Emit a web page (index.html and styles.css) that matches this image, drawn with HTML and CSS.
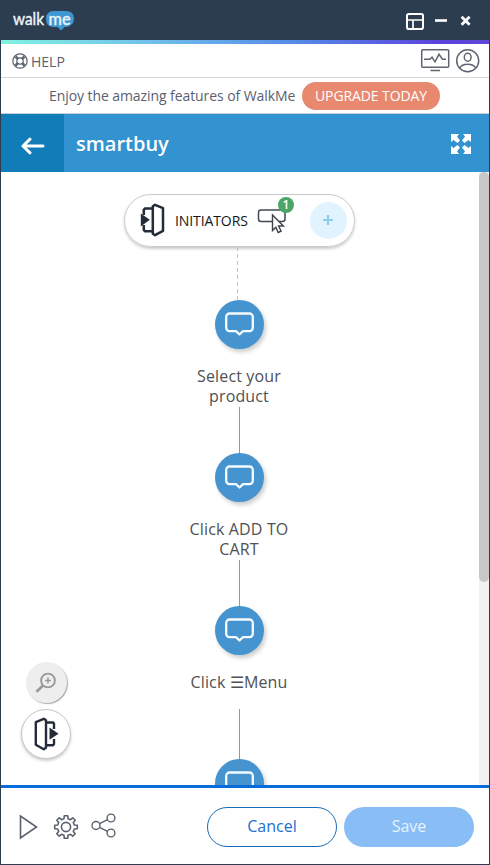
FILE: index.html
```html
<!DOCTYPE html>
<html lang="en">
<head>
<meta charset="utf-8">
<title>WalkMe Editor</title>
<link rel="stylesheet" href="styles.css">
</head>
<body>
<svg class="defs" width="0" height="0" aria-hidden="true">
  <symbol id="balloon" viewBox="0 0 49 49"><path d="M14.500 13.500h20a3.300 3.300 0 0 1 3.300 3.300v11a3.300 3.300 0 0 1-3.300 3.300h-6.500L24.500 34.500l-3.500-3.400h-6.500a3.300 3.300 0 0 1-3.300-3.300v-11A3.300 3.300 0 0 1 14.500 13.500z" fill="none" stroke="#f4fbff" stroke-width="2.300" stroke-linejoin="round"/></symbol>
</svg>
<div class="window">
  <header class="titlebar">
    <svg class="logo" width="64" height="28" viewBox="0 0 64 28">
      <path d="M42 3h12q8 0 8 7.500t-8 8.500h-1.500l-3.500 3.500-3.500-3.500H42q-8 0-8-8t8-8z" fill="#3d97d3"/>
      <text class="logo-text" x="1" y="16.500" textLength="31" lengthAdjust="spacingAndGlyphs">walk</text>
      <text class="logo-text" x="36.500" y="16.500" textLength="22" lengthAdjust="spacingAndGlyphs">me</text>
    </svg>
    <svg class="window-controls" width="66" height="20" viewBox="0 0 66 20" fill="none" stroke="#fff">
      <rect x="1" y="3" width="16" height="15" rx="1.800" stroke-width="2"/>
      <path d="M1 9h16M7 9v9" stroke-width="1.700"/>
      <path d="M29 9.500h12" stroke-width="2.600"/>
      <path d="M55.600 5.700l8 8M63.600 5.700l-8 8" stroke-width="2.800"/>
    </svg>
  </header>
  <div class="rainbow"></div>
  <div class="help-row">
    <svg width="16" height="16" viewBox="0 0 16 16" fill="none" stroke="#596170" stroke-width="1.200">
      <circle cx="8" cy="8" r="7.200"/><circle cx="8" cy="8" r="3.200"/>
      <path d="M2.500 3.700l3 2.500M3.700 2.500l2.500 3M13.500 3.700l-3 2.500M12.300 2.500l-2.500 3M2.500 12.300l3-2.500M3.700 13.500l2.500-3M13.500 12.300l-3-2.500M12.300 13.500l-2.500-3"/>
    </svg>
    <span class="help-label">HELP</span>
    <svg class="account" width="60" height="26" viewBox="0 0 60 26" fill="none" stroke="#5f6570" stroke-width="1.500">
      <rect x="1.700" y="1.700" width="27" height="17.500" rx="1"/>
      <path d="M10.500 22.500h9.500M4 11.300h6l2-2 3 4.500 4-7.500 3.500 5h3.500"/>
      <circle cx="47.700" cy="12.700" r="11"/>
      <ellipse cx="47.700" cy="9.300" rx="3.400" ry="4"/>
      <path d="M39.500 20.200c1.800-3.300 4.600-4 8.200-4s6.400.7 8.200 4"/>
    </svg>
  </div>
  <div class="promo"><span class="promo-text">Enjoy the amazing features of WalkMe</span><span class="upgrade">UPGRADE TODAY</span></div>
  <div class="flow-header">
    <div class="back">
      <svg width="24" height="20" viewBox="0 0 24 20" fill="none" stroke="#fff" stroke-width="3" stroke-linecap="round" stroke-linejoin="round"><path d="M22 10H2M9 3.200L2 10l7 6.800"/></svg>
    </div>
    <h1>smartbuy</h1>
    <svg class="expand" width="20" height="20" viewBox="0 0 20 20" fill="#fff">
      <path id="corner" d="M0 0h8L6 2.500 9 6.500 6.500 9 2.500 6 0 8z"/>
      <use href="#corner" transform="translate(20 0) scale(-1 1)"/>
      <use href="#corner" transform="translate(0 20) scale(1 -1)"/>
      <use href="#corner" transform="translate(20 20) scale(-1 -1)"/>
    </svg>
  </div>
  <main class="canvas">
    <div class="diagram">
      <div class="initiators">
        <svg class="door" width="26" height="34" viewBox="0 0 26 34">
          <path d="M13 5.500H5L3.800 6.700V12M3.800 22v5l1.200 1.200h8" fill="none" stroke="#242c3a" stroke-width="2.500"/>
          <path d="M12.800 3.200l2.200-1.400 8 3.400v22.600L15 32.200l-2.200-1.400z" fill="#fff" stroke="#242c3a" stroke-width="2.500" stroke-linejoin="round"/>
          <path d="M.8 10.500l9 6.300-9 6.700z" fill="#242c3a"/>
        </svg>
        <span class="initiators-label">INITIATORS</span>
        <div class="trigger">
          <svg width="31" height="27" viewBox="0 0 31 27">
            <rect x="1.500" y="2" width="26.500" height="11.500" rx="2.500" fill="none" stroke="#414951" stroke-width="1.500"/>
            <path d="M15.500 7v15.500l3.300-3.300 2.400 5.300 2.900-1.300-2.500-5.200h4.800z" fill="#fff" stroke="#3d4148" stroke-width="1.400"/>
          </svg>
          <span class="badge">1</span>
        </div>
        <span class="add"><svg width="12" height="12" viewBox="0 0 12 12"><path d="M6 1v10M1 6h10" stroke="#8fcbed" stroke-width="2.200"/></svg></span>
      </div>
      <div class="dashed"></div>
      <div class="step"><svg class="node"><use href="#balloon"/></svg><p>Select your<br>product</p></div>
      <div class="connector"></div>
      <div class="step"><svg class="node"><use href="#balloon"/></svg><p>Click ADD TO<br>CART</p></div>
      <div class="connector"></div>
      <div class="step"><svg class="node"><use href="#balloon"/></svg><p class="single">Click ☰Menu</p></div>
      <div class="connector tall"></div>
      <div class="step"><svg class="node"><use href="#balloon"/></svg></div>
    </div>
    <div class="tools">
      <span class="tool zoom"><svg width="22" height="22" viewBox="0 0 22 22" fill="none" stroke="#999"><circle cx="13" cy="8.500" r="6.900" stroke-width="1.900"/><path d="M8 13.500l-6.500 6.300" stroke-width="2.600"/><path d="M13 5.500v6M10 8.500h6" stroke-width="1.500"/></svg></span>
      <span class="tool exit">
        <svg width="26" height="34" viewBox="0 0 26 34">
          <path d="M13 5.500h7l1 1.200V12M21 22v5l-1 1.200h-7" fill="none" stroke="#242c3a" stroke-width="2.400"/>
          <path d="M13 3.200l-2.200-1.400-8 3.400v22.600l8 4.400 2.200-1.400z" fill="#fff" stroke="#242c3a" stroke-width="2.400" stroke-linejoin="round"/>
          <path d="M16.500 10.500l9 6.300-9 6z" fill="#242c3a"/>
        </svg>
      </span>
    </div>
    <div class="scrollbar"><div class="thumb"></div></div>
  </main>
  <footer class="footer">
    <svg width="20" height="26" viewBox="0 0 20 26" fill="none" stroke="#5a616e" stroke-width="1.600"><path d="M2.500 2v22L18.500 13z"/></svg>
    <svg class="gear" width="26" height="26" viewBox="-13 -13 26 26" fill="none" stroke="#5a616e" stroke-width="1.600" stroke-linejoin="round">
      <path d="M-2-8.300L-1.700-11.300H1.700L2-8.300 4.500-7.300 6.800-9.200 9.200-6.800 7.300-4.500 8.300-2 11.300-1.700V1.700L8.300 2 7.300 4.500 9.200 6.800 6.800 9.200 4.500 7.300 2 8.300 1.700 11.300H-1.700L-2 8.300-4.500 7.300-6.800 9.200-9.200 6.800-7.300 4.500-8.300 2-11.300 1.700V-1.700L-8.300-2-7.300-4.500-9.200-6.800-6.800-9.200-4.500-7.300z"/><circle r="4.600"/>
    </svg>
    <svg class="share" width="26" height="26" viewBox="0 0 26 26" fill="none" stroke="#5a616e" stroke-width="1.400"><circle cx="5" cy="12.500" r="4"/><circle cx="20" cy="5" r="3.900"/><circle cx="20" cy="20" r="3.900"/><path d="M8.600 10.700l7.900-4M8.600 14.300l7.900 4"/></svg>
    <button class="btn cancel">Cancel</button>
    <button class="btn save">Save</button>
  </footer>
</div>
</body>
</html>
```
FILE: styles.css
```css
* { box-sizing: border-box; }
body { margin: 0; font-family: "Open Sans", "Noto Sans", sans-serif; color: #5b6070; }
svg { display: block; flex: none; }
.defs { position: absolute; }
.window { width: 490px; height: 865px; display: flex; flex-direction: column; background: #fff; border: solid #2d3d50; border-width: 0 1px 1px; overflow: hidden; }
.titlebar { height: 40px; flex: none; display: flex; align-items: center; justify-content: space-between; padding: 0 16px 0 12px; margin: 0 -1px; background: #2d3d50; }
.logo { margin-top: 4px; overflow: visible; }
.logo-text { font-family: Lato, sans-serif; font-size: 17px; fill: #eef3f7; stroke: #eef3f7; stroke-width: .4px; }
.window-controls { margin-right: 2px; margin-top: 2px; }
.rainbow { height: 4px; flex: none; background: linear-gradient(90deg, #80f2e0 0%, #73c4ea 28%, #558ce8 60%, #5b43dc 90%, #6046d5 100%); }
.help-row { height: 34px; flex: none; display: flex; align-items: center; padding: 0 9px 0 11px; border-bottom: 1px solid #d6d7da; }
.help-label { font-size: 14px; margin-left: 3px; position: relative; top: 1px; }
.account { margin-left: auto; }
.promo { height: 36px; flex: none; display: flex; align-items: center; padding-left: 48px; border-bottom: 1px solid #c9ced2; font-size: 14px; letter-spacing: -.08px; white-space: nowrap; }
.promo-text { width: 246px; }
.upgrade { width: 138px; height: 28px; margin-left: 7px; border-radius: 14px; background: #e8896f; color: #fff; text-align: center; line-height: 28px; font-size: 14px; letter-spacing: -.1px; }
.flow-header { height: 58px; flex: none; display: flex; align-items: center; background: #3392d0; color: #fff; padding-right: 18px; }
.back { width: 63px; height: 58px; display: flex; align-items: center; justify-content: center; background: #107cb8; padding-top: 5px; }
h1 { margin: 2px 0 0 12px; font-size: 20px; line-height: 28px; font-weight: 600; }
.expand { margin-left: auto; margin-top: 2px; }
.canvas { position: relative; height: 613px; flex: none; overflow: hidden; }
.diagram { width: 477px; padding-top: 22px; display: flex; flex-direction: column; align-items: center; }
.initiators { width: 231px; height: 53px; display: flex; align-items: center; border: 1px solid #c9c9c9; border-radius: 27px; box-shadow: 0 2px 3px #0003; padding-left: 15px; }
.door { margin-top: -1px; }
.initiators-label { width: 73px; margin-left: 9px; font-size: 14px; letter-spacing: -.1px; color: #111822; white-space: nowrap; }
.trigger { position: relative; margin-left: 9px; padding-top: 2px; }
.badge { position: absolute; left: 21px; top: -9px; width: 16px; height: 16px; border-radius: 50%; background: #4aa567; color: #fff; text-align: center; font-size: 12px; font-weight: 600; line-height: 16px; }
.add { width: 37px; height: 37px; margin-left: 22px; border-radius: 50%; background: #e0f3fe; display: flex; align-items: center; justify-content: center; }
.add svg { margin-right: 1px; margin-bottom: 1px; }
.dashed { height: 53px; width: 1px; margin-right: 4px; background: repeating-linear-gradient(#eab79b 0 4px, transparent 4px 7px); }
.step { display: flex; flex-direction: column; align-items: center; }
.node { width: 49px; height: 49px; border-radius: 50%; background: #4594d0; box-shadow: 2px 3px 4px #0003; }
p { margin: 17px 0 0; height: 41px; padding-right: 1px; font-size: 16px; letter-spacing: .15px; line-height: 20px; text-align: center; color: #505154; }
.connector { width: 1px; height: 46px; background: #d08f32; }
.single { height: 37px; }
.connector.tall { height: 50px; }
.tools { position: absolute; left: 20px; top: 490px; width: 50px; display: flex; flex-direction: column; align-items: center; gap: 6px; }
.tool { display: flex; align-items: center; justify-content: center; border-radius: 50%; }
.zoom { width: 41px; height: 41px; background: #eee; box-shadow: 1px 1px 1px #aaa; }
.exit { width: 50px; height: 50px; background: #fff; border: 1px solid #c6c6c6; box-shadow: 0 2px 3px #0003; }
.scrollbar { position: absolute; right: 0; top: 0; width: 10px; height: 613px; background: #f1f1f1; }
.thumb { height: 410px; border-radius: 5px; background: #c8c8c8; }
.footer { height: 79px; flex: none; display: flex; align-items: center; border-top: 3px solid #086ddb; padding: 2px 15px 0 17px; }
.gear { margin-left: 15px; }
.share { margin-left: 12px; margin-top: -3px; }
.btn { height: 40px; width: 130px; border-radius: 20px; font: 16px "Open Sans", sans-serif; padding: 0 0 2px; }
.cancel { margin-left: auto; background: #fff; border: 1px solid #176bb8; color: #1d6fd2; }
.save { margin-left: 7px; background: #88bdf5; border: 0; color: #e6f3ff; }
```
